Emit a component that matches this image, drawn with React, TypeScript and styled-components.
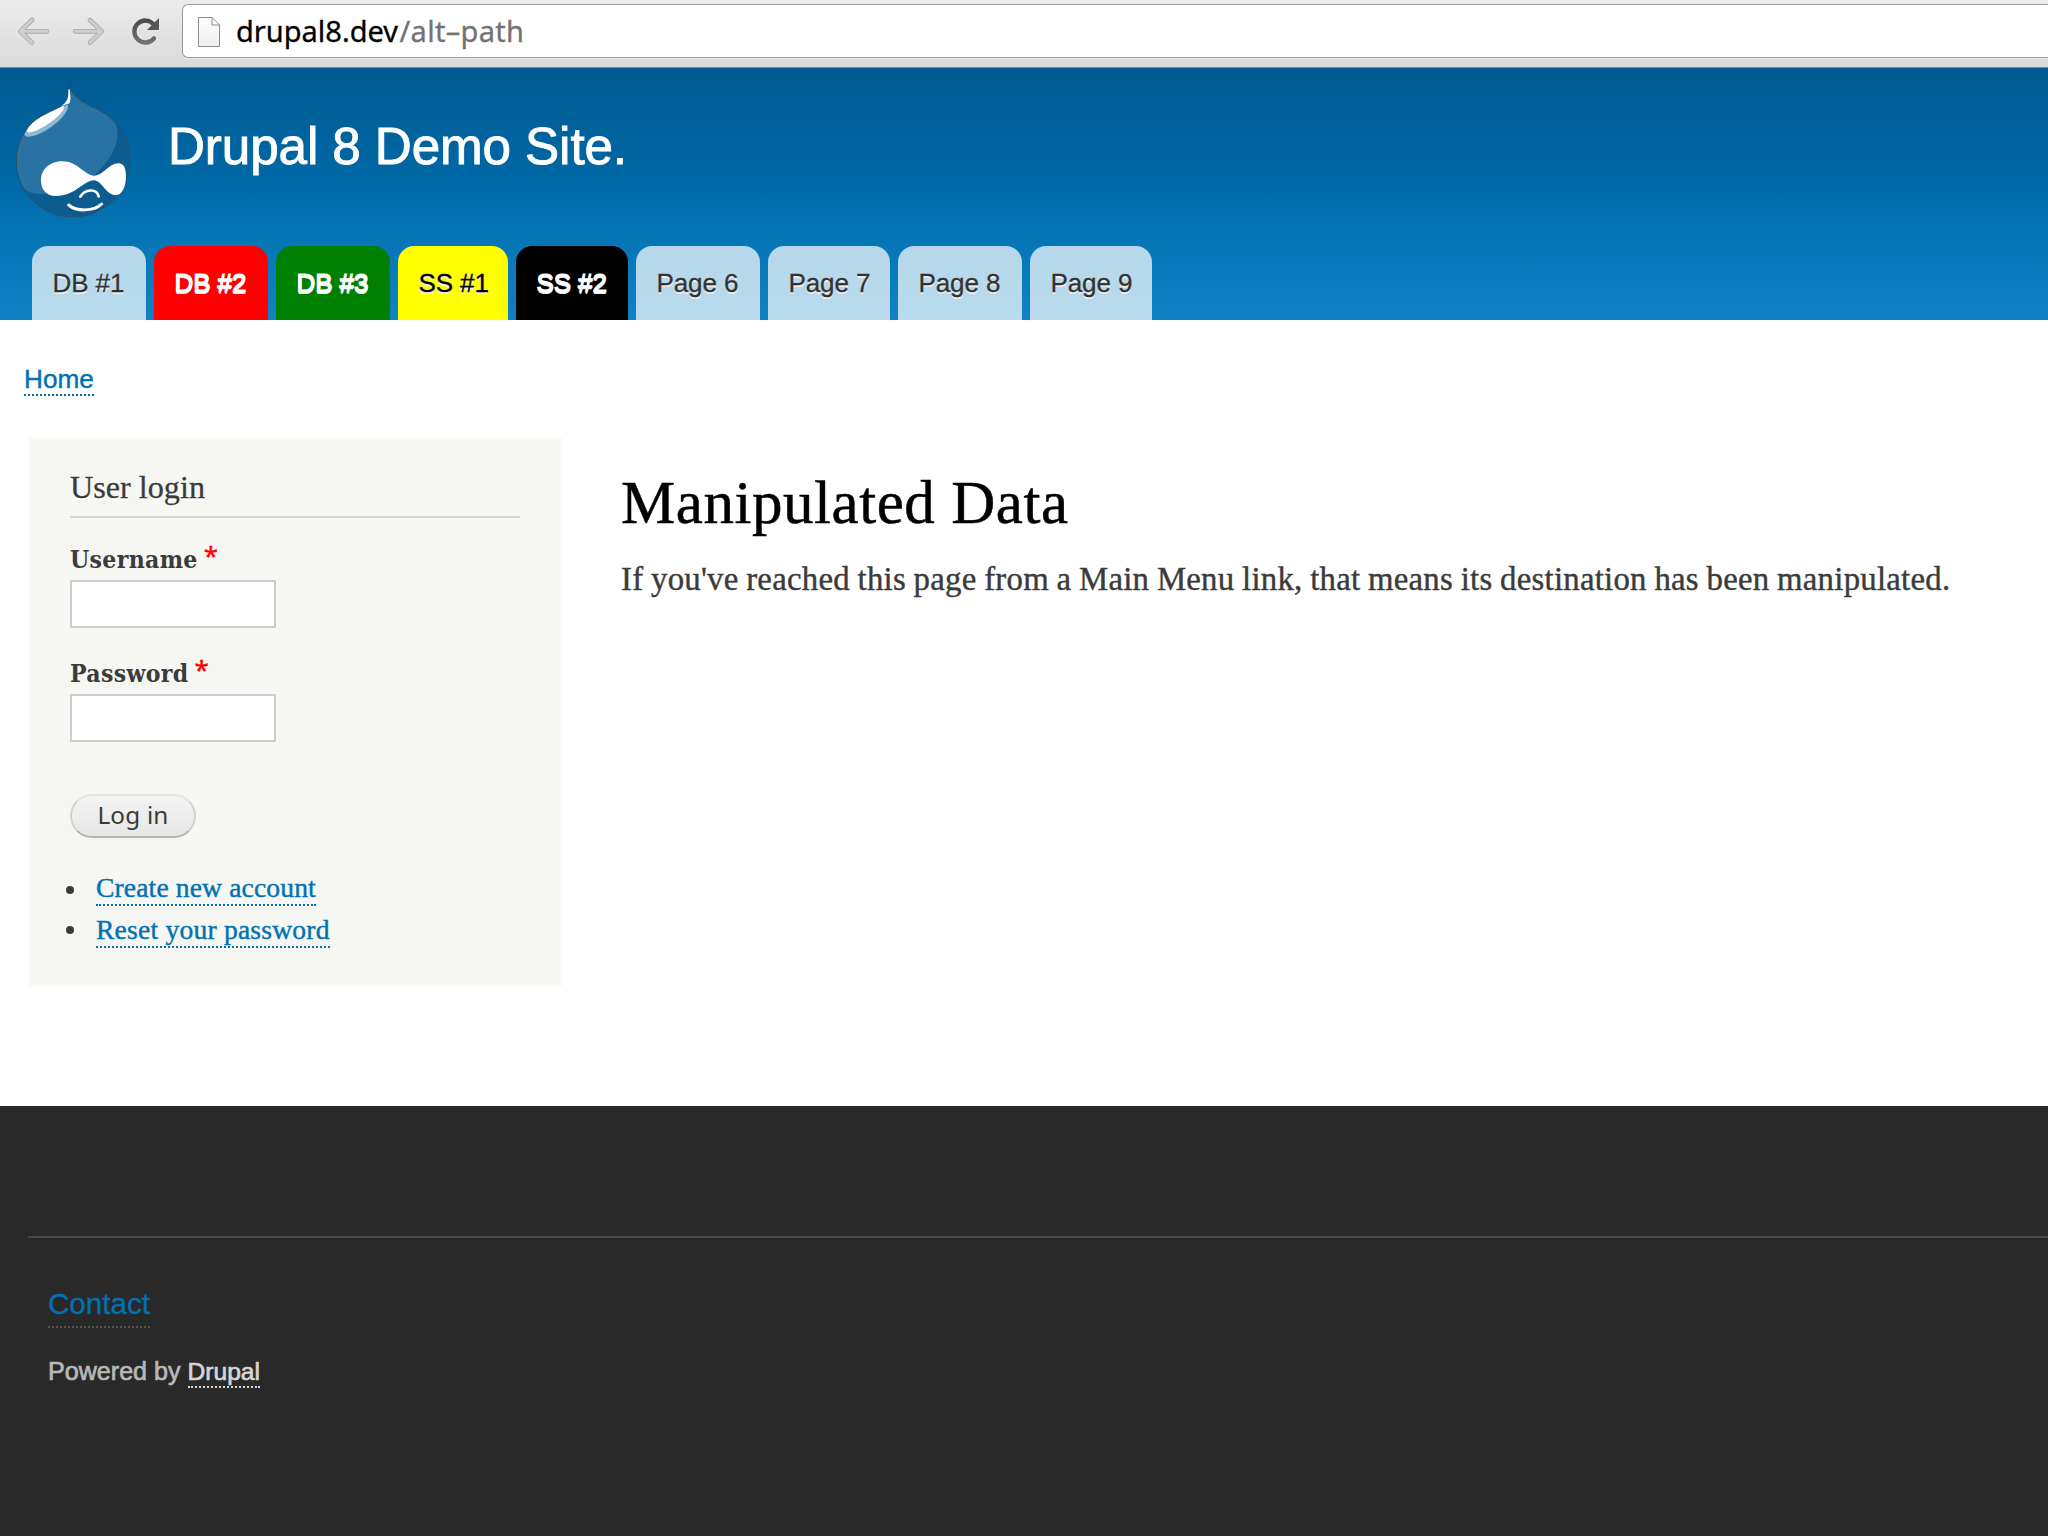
import React from 'react';
import styled, { createGlobalStyle, css } from 'styled-components';

const sans = '"Liberation Sans", Arial, sans-serif';
const serif = '"Liberation Serif", Georgia, serif';
const boldSerif = '"DejaVu Serif Condensed", "DejaVu Serif", Georgia, serif';
const ui = '"Noto Sans", "Lucida Grande", sans-serif';

const GlobalStyle = createGlobalStyle`
  *, *::before, *::after { box-sizing: border-box; }
  html, body { margin: 0; padding: 0; background: #fff; overflow: hidden; }
`;

const Window = styled.div`
  display: flex;
  flex-direction: column;
  width: 2048px;
  height: 1536px;
  overflow: hidden;
  background: #fff;
  color: #3b3b3b;
`;

/* Browser bar */
const BrowserBar = styled.div`
  display: flex;
  align-items: flex-start;
  flex: none;
  height: 68px;
  background: linear-gradient(#ececec, #dadada 66px);
  border-bottom: 1px solid #858585;
`;

const NavIcons = styled.svg`
  display: block;
  flex: none;
  width: 182px;
  height: 66px;
`;

const AddressBox = styled.div`
  display: flex;
  align-items: center;
  flex: 1;
  height: 54px;
  margin-top: 4px;
  background: #fff;
  border: 1px solid #9a9a9a;
  border-right: 0;
  border-radius: 6px 0 0 6px;
  box-shadow: 0 1px 0 #ededed;
`;

const PageIcon = styled.svg`
  display: block;
  width: 24px;
  height: 32px;
  margin: 1px 15px 0 14px;
`;

const Address = styled.div`
  font: 29px/40px ${ui};
  color: #000;
  -webkit-text-stroke: 0.3px;
  white-space: nowrap;
`;

const AddressPath = styled.span`
  margin-left: 1.5px;
  color: #727272;
  letter-spacing: 0.3px;
`;

/* Site header */
const Header = styled.header`
  display: flex;
  flex-direction: column;
  flex: none;
  height: 252px;
  background: linear-gradient(#005a91, #006aa8 48%, #0474b4 64%, #1082c4);
`;

const Branding = styled.div`
  display: flex;
  align-items: flex-start;
  height: 178px;
  padding-left: 15px;
`;

const Logo = styled.svg`
  display: block;
  width: 116px;
  height: 132px;
  margin-top: 18.7px;
`;

const SiteName = styled.h1`
  margin: 49px 0 0 37px;
  font: 400 51.2px/60px ${sans};
  letter-spacing: -0.1px;
  color: #fff;
  -webkit-text-stroke: 0.9px #fff;
  white-space: nowrap;
`;

const Tabs = styled.nav`
  display: flex;
  gap: 8px;
  height: 74px;
  padding-left: 32px;
`;

const Tab = styled.a<{ $w: number; $bg?: string; $fg?: string; $heavy?: boolean }>`
  width: ${(p) => p.$w}px;
  height: 74px;
  padding-left: 20.5px;
  border-radius: 16px 16px 0 0;
  background: ${(p) => p.$bg ?? 'rgba(255, 255, 255, 0.71)'};
  color: ${(p) => p.$fg ?? '#333'};
  font: 26px/74px ${sans};
  letter-spacing: -0.1px;
  text-shadow: 0 2px 0 #eee;
  white-space: nowrap;
  -webkit-text-stroke: 0.3px;
  ${(p) => p.$heavy && css`-webkit-text-stroke: 1.2px #fff;`}
`;

/* Page body */
const Page = styled.div`
  display: flex;
  flex-direction: column;
  flex: none;
  height: 786px;
  padding-top: 44px;
`;

const DottedLink = styled.a<{ $size: number; $lh: number; $font: string; $color?: string; $line?: string; $track?: number; $stroke?: number }>`
  display: inline-block;
  font: ${(p) => p.$size}px/${(p) => p.$lh}px ${(p) => p.$font};
  letter-spacing: ${(p) => p.$track ?? 0}px;
  color: ${(p) => p.$color ?? '#0071b3'};
  -webkit-text-stroke: ${(p) => p.$stroke ?? 0}px;
  border-bottom: 2px dotted ${(p) => p.$line ?? '#0071b3'};
  white-space: nowrap;
`;

const Breadcrumb = styled.div`
  display: flex;
  height: 32px;
  padding-left: 24px;
`;

const Columns = styled.div`
  display: flex;
  align-items: flex-start;
  margin-top: 42px;
  padding-left: 28px;
`;

const Sidebar = styled.aside`
  flex: none;
  width: 534px;
  height: 548px;
  padding: 19px 40px 0;
  background: #f6f6f2;
  border: 2px solid #f9f9f9;
`;

const BlockTitle = styled.h2`
  height: 59px;
  margin: 0;
  font: 400 32.2px/57px ${serif};
  color: #3b3b3b;
  border-bottom: 2px solid #d6d6d6;
  text-shadow: 0 2px 0 #fff;
  -webkit-text-stroke: 0.3px;
`;

const Field = styled.div<{ $gap: number }>`
  display: flex;
  flex-direction: column;
  align-items: flex-start;
  margin-top: ${(p) => p.$gap}px;
`;

const Label = styled.label`
  display: flex;
  height: 41px;
  font: 700 24.5px/41px ${boldSerif};
  letter-spacing: 0.35px;
`;

const Required = styled.span`
  margin: -4px 0 0 6px;
  font: 400 26px/41px ${ui};
  color: #f00;
  -webkit-text-stroke: 0.4px #f00;
`;

const TextInput = styled.input`
  display: block;
  width: 206px;
  height: 48px;
  margin: 0;
  padding: 4px;
  background: #fff;
  border: 2px solid #ccc;
  border-radius: 0;
  outline: 0;
`;

const Submit = styled.button`
  display: block;
  width: 126px;
  height: 44px;
  margin: 52px 0 0;
  padding: 0 0 2px;
  font: 24.3px/36px ${ui};
  letter-spacing: 0.2px;
  color: #3a3a3a;
  background: linear-gradient(#f3f3f3, #e7e7e7);
  border: 2px solid;
  border-color: #e4e4e4 #d2d2d2 #b4b4b4;
  border-radius: 22px;
`;

const LinkList = styled.ul`
  display: flex;
  flex-direction: column;
  gap: 8px;
  margin: 34px 0 0 -4px;
  padding: 0;
  list-style: none;
`;

const LinkItem = styled.li`
  display: flex;
  height: 34px;
  &::before {
    content: '';
    width: 8px;
    height: 8px;
    margin: 14px 22px 0 0;
    border-radius: 50%;
    background: #3b3b3b;
  }
  &:last-child::before { margin-top: 12px; }
`;

const Main = styled.main`
  padding: 30px 0 0 59px;
`;

const PageTitle = styled.h1`
  margin: 0;
  font: 400 61px/69px ${serif};
  letter-spacing: 0.55px;
  color: #000;
  -webkit-text-stroke: 0.5px;
`;

const Body = styled.p`
  margin: 20px 0 0;
  font: 32.8px/44px ${serif};
  letter-spacing: 0.25px;
  word-spacing: -0.8px;
  -webkit-text-stroke: 0.4px;
  white-space: nowrap;
`;

/* Footer */
const Footer = styled.footer`
  flex: 1;
  padding: 130px 0 0 28px;
  background: #292929;
`;

const FooterInner = styled.div`
  display: flex;
  flex-direction: column;
  align-items: flex-start;
  padding: 44px 0 0 20px;
  border-top: 2px solid #484848;
`;

const Powered = styled.div`
  display: flex;
  margin-top: 29px;
  font: 25.1px/29px ${sans};
  color: #b8b8b8;
  -webkit-text-stroke: 0.7px;
  white-space: pre;
`;

const tabs: { label: string; w: number; bg?: string; fg?: string; heavy?: boolean }[] = [
  { label: 'DB #1', w: 114 },
  { label: 'DB #2', w: 114, bg: '#f00', fg: '#fff', heavy: true },
  { label: 'DB #3', w: 114, bg: '#008000', fg: '#fff', heavy: true },
  { label: 'SS #1', w: 110, bg: '#ff0', fg: '#000' },
  { label: 'SS #2', w: 112, bg: '#000', fg: '#fff', heavy: true },
  { label: 'Page 6', w: 124 },
  { label: 'Page 7', w: 122 },
  { label: 'Page 8', w: 124 },
  { label: 'Page 9', w: 122 },
];

const drop =
  'M208,53 C222,80 252,99 290,116 C352,145 389,205 389,272 C389,365 313,440 219,440 C125,440 49,365 49,272 C49,222 70,182 97,157 C130,127 178,116 198,98 C209,88 206,66 208,53 Z';

function DrupalLogo() {
  return (
    <Logo viewBox="45 50 348 396">
      <defs>
        <clipPath id="drop"><path d={drop} /></clipPath>
      </defs>
      <path d={drop} fill="#0d5c8f" />
      <g clipPath="url(#drop)">
        <path d="M40,40 H340 V150 Q354,168 352,195 C350,262 270,365 130,371 Q95,373 70,355 L40,330 Z" fill="#2873a4" />
        <path d="M74,192 C80,160 150,110 204,104 C206,130 165,166 128,186 C105,198 74,206 74,192 Z" fill="#8fb8d3" />
        <path d="M82,184 C80,160 130,118 191,107 C197,122 160,153 128,171 C108,183 87,190 82,184 Z" fill="#fff" />
      </g>
      <path d={drop} fill="none" stroke="#2f4f68" strokeWidth="3" />
      <path d="M205,57 H209 C210,70 214,86 209,97 C203,104 194,101 184,108 L180,109 C202,98 206,84 205,57 Z" fill="#fff" />
      <path
        d="M123,330 C123,292 155,273 187,273 C235,273 252,316 283,316 C309,316 326,279 355,279 C372,279 378,295 378,318 C378,350 365,375 348,375 C318,375 305,330 282,330 C250,330 228,377 167,377 C140,377 123,360 123,330 Z"
        fill="#fff"
      />
      <g fill="none" stroke="#fff" strokeLinecap="round">
        <path d="M241,379 C254,357 290,352 296,378" strokeWidth="8" />
        <path d="M206,404 C228,423 280,425 305,401" strokeWidth="9" />
      </g>
    </Logo>
  );
}

function Navigation() {
  const back = 'M61,94 H141 M96,60 L61,94 L96,128';
  const forward = 'M225,94 H305 M270,60 L305,94 L270,128';
  return (
    <NavIcons viewBox="0 0 546 198">
      <defs>
        <linearGradient id="reload" x1="0" y1="0" x2="0" y2="1">
          <stop offset="0" stopColor="#4c4c4c" />
          <stop offset="1" stopColor="#707070" />
        </linearGradient>
      </defs>
      <g fill="none" strokeLinecap="round" strokeLinejoin="round">
        <path d={back + ' ' + forward} stroke="#aaa" strokeWidth="14" />
        <path d={back + ' ' + forward} stroke="#cecece" strokeWidth="9" />
        <path d="M461,73 A33,33 0 1 0 462,115" stroke="url(#reload)" strokeWidth="13" />
      </g>
      <path d="M477,54 V90 H441 Z" fill="#565656" />
    </NavIcons>
  );
}

export default function App() {
  return (
    <Window>
      <GlobalStyle />
      <BrowserBar>
        <Navigation />
        <AddressBox>
          <PageIcon viewBox="0 0 24 32">
            <defs>
              <linearGradient id="sheet" x1="0" y1="0" x2="0" y2="1">
                <stop offset="0" stopColor="#fff" />
                <stop offset="1" stopColor="#eee" />
              </linearGradient>
            </defs>
            <path d="M1.5,1.5 H15 L22.5,9 V30.5 H1.5 Z" fill="url(#sheet)" stroke="#8c8c8c" strokeWidth="1" />
            <path d="M15,1.5 V9 H22.5" fill="none" stroke="#8c8c8c" strokeWidth="1" />
          </PageIcon>
          <Address>drupal8.dev<AddressPath>/alt–path</AddressPath></Address>
        </AddressBox>
      </BrowserBar>
      <Header>
        <Branding>
          <DrupalLogo />
          <SiteName>Drupal 8 Demo Site.</SiteName>
        </Branding>
        <Tabs>
          {tabs.map((t) => (
            <Tab key={t.label} $w={t.w} $bg={t.bg} $fg={t.fg} $heavy={t.heavy}>{t.label}</Tab>
          ))}
        </Tabs>
      </Header>
      <Page>
        <Breadcrumb>
          <DottedLink $size={26.2} $lh={30} $font={sans} $stroke={0.4}>Home</DottedLink>
        </Breadcrumb>
        <Columns>
          <Sidebar>
            <BlockTitle>User login</BlockTitle>
            <Field $gap={21}>
              <Label>Username<Required>*</Required></Label>
              <TextInput type="text" />
            </Field>
            <Field $gap={25}>
              <Label>Password<Required>*</Required></Label>
              <TextInput type="password" />
            </Field>
            <Submit>Log in</Submit>
            <LinkList>
              <LinkItem><DottedLink $size={27.6} $lh={32} $font={serif} $track={0.13} $stroke={0.4}>Create new account</DottedLink></LinkItem>
              <LinkItem><DottedLink $size={27.6} $lh={32} $font={serif} $track={0.2} $stroke={0.4}>Reset your password</DottedLink></LinkItem>
            </LinkList>
          </Sidebar>
          <Main>
            <PageTitle>Manipulated Data</PageTitle>
            <Body>If you've reached this page from a Main Menu link, that means its destination has been manipulated.</Body>
          </Main>
        </Columns>
      </Page>
      <Footer>
        <FooterInner>
          <DottedLink $size={29.6} $lh={44} $font={sans} $line="#555" $stroke={0.3}>Contact</DottedLink>
          <Powered>
            {'Powered by '}
            <DottedLink $size={24.6} $lh={29} $font={sans} $color="#d6d6d6" $line="#d6d6d6" $stroke={0.7}>Drupal</DottedLink>
          </Powered>
        </FooterInner>
      </Footer>
    </Window>
  );
}
